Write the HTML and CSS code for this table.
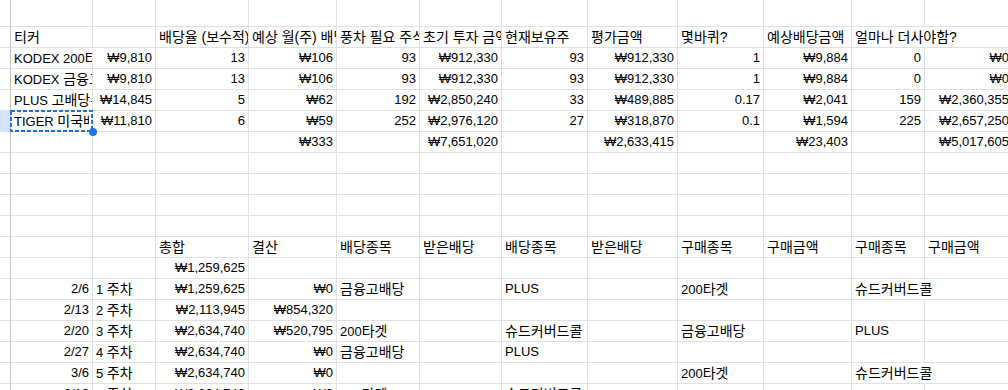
FILE: index.html
```html
<!DOCTYPE html>
<html lang="ko">
<head>
<meta charset="utf-8">
<title>배당 시트</title>
<link rel="stylesheet" href="styles.css">
</head>
<body>
<div class="sheet">
  <div class="r top"><div class="c h"></div><div class="c"></div><div class="c"></div><div class="c"></div><div class="c"></div><div class="c"></div><div class="c"></div><div class="c"></div><div class="c"></div><div class="c"></div><div class="c"></div><div class="c"></div><div class="c"></div></div>
  <div class="r"><div class="c h"></div><div class="c k">티커</div><div class="c"></div><div class="c k">배당율 (보수적)</div><div class="c k">예상 월(주) 배당금</div><div class="c k">풍차 필요 주식수</div><div class="c k">초기 투자 금액</div><div class="c k">현재보유주</div><div class="c k">평가금액</div><div class="c k">몇바퀴?</div><div class="c k">예상배당금액</div><div class="c k spill">얼마나 더사야함?</div><div class="c"></div></div>
  <div class="r"><div class="c h"></div><div class="c">KODEX 200<span class="k">타겟위클리커버드콜</span></div><div class="c n">₩9,810</div><div class="c n">13</div><div class="c n">₩106</div><div class="c n">93</div><div class="c n">₩912,330</div><div class="c n">93</div><div class="c n">₩912,330</div><div class="c n">1</div><div class="c n">₩9,884</div><div class="c n">0</div><div class="c n">₩0</div></div>
  <div class="r"><div class="c h"></div><div class="c">KODEX <span class="k">금융고배당</span>TOP10<span class="k">타겟위클리커버드콜</span></div><div class="c n">₩9,810</div><div class="c n">13</div><div class="c n">₩106</div><div class="c n">93</div><div class="c n">₩912,330</div><div class="c n">93</div><div class="c n">₩912,330</div><div class="c n">1</div><div class="c n">₩9,884</div><div class="c n">0</div><div class="c n">₩0</div></div>
  <div class="r"><div class="c h"></div><div class="c">PLUS <span class="k">고배당주위클리커버드콜</span></div><div class="c n">₩14,845</div><div class="c n">5</div><div class="c n">₩62</div><div class="c n">192</div><div class="c n">₩2,850,240</div><div class="c n">33</div><div class="c n">₩489,885</div><div class="c n">0.17</div><div class="c n">₩2,041</div><div class="c n">159</div><div class="c n">₩2,360,355</div></div>
  <div class="r"><div class="c h sel-row"></div><div class="c sel"><span class="sel-txt">TIGER <span class="k">미국배당다우존스타겟데일리커버드콜</span></span><svg class="ants" width="83" height="22" viewBox="0 0 83 22" aria-hidden="true"><rect x="1" y="1" width="81" height="20" fill="none" stroke="#1a73e8" stroke-width="2" stroke-dasharray="4 2"/></svg><span class="handle"></span></div><div class="c n">₩11,810</div><div class="c n">6</div><div class="c n">₩59</div><div class="c n">252</div><div class="c n">₩2,976,120</div><div class="c n">27</div><div class="c n">₩318,870</div><div class="c n">0.1</div><div class="c n">₩1,594</div><div class="c n">225</div><div class="c n">₩2,657,250</div></div>
  <div class="r"><div class="c h"></div><div class="c"></div><div class="c"></div><div class="c"></div><div class="c n">₩333</div><div class="c"></div><div class="c n">₩7,651,020</div><div class="c"></div><div class="c n">₩2,633,415</div><div class="c"></div><div class="c n">₩23,403</div><div class="c"></div><div class="c n">₩5,017,605</div></div>
  <div class="r"><div class="c h"></div><div class="c"></div><div class="c"></div><div class="c"></div><div class="c"></div><div class="c"></div><div class="c"></div><div class="c"></div><div class="c"></div><div class="c"></div><div class="c"></div><div class="c"></div><div class="c"></div></div>
  <div class="r"><div class="c h"></div><div class="c"></div><div class="c"></div><div class="c"></div><div class="c"></div><div class="c"></div><div class="c"></div><div class="c"></div><div class="c"></div><div class="c"></div><div class="c"></div><div class="c"></div><div class="c"></div></div>
  <div class="r"><div class="c h"></div><div class="c"></div><div class="c"></div><div class="c"></div><div class="c"></div><div class="c"></div><div class="c"></div><div class="c"></div><div class="c"></div><div class="c"></div><div class="c"></div><div class="c"></div><div class="c"></div></div>
  <div class="r"><div class="c h"></div><div class="c"></div><div class="c"></div><div class="c"></div><div class="c"></div><div class="c"></div><div class="c"></div><div class="c"></div><div class="c"></div><div class="c"></div><div class="c"></div><div class="c"></div><div class="c"></div></div>
  <div class="r"><div class="c h"></div><div class="c"></div><div class="c"></div><div class="c k">총합</div><div class="c k">결산</div><div class="c k">배당종목</div><div class="c k">받은배당</div><div class="c k">배당종목</div><div class="c k">받은배당</div><div class="c k">구매종목</div><div class="c k">구매금액</div><div class="c k">구매종목</div><div class="c k">구매금액</div></div>
  <div class="r"><div class="c h"></div><div class="c"></div><div class="c"></div><div class="c n">₩1,259,625</div><div class="c"></div><div class="c"></div><div class="c"></div><div class="c"></div><div class="c"></div><div class="c"></div><div class="c"></div><div class="c"></div><div class="c"></div></div>
  <div class="r"><div class="c h"></div><div class="c n">2/6</div><div class="c">1 <span class="k">주차</span></div><div class="c n">₩1,259,625</div><div class="c n">₩0</div><div class="c k">금융고배당</div><div class="c"></div><div class="c">PLUS</div><div class="c"></div><div class="c">200<span class="k">타겟</span></div><div class="c"></div><div class="c k spill">슈드커버드콜</div><div class="c"></div></div>
  <div class="r"><div class="c h"></div><div class="c n">2/13</div><div class="c">2 <span class="k">주차</span></div><div class="c n">₩2,113,945</div><div class="c n">₩854,320</div><div class="c"></div><div class="c"></div><div class="c"></div><div class="c"></div><div class="c"></div><div class="c"></div><div class="c"></div><div class="c"></div></div>
  <div class="r"><div class="c h"></div><div class="c n">2/20</div><div class="c">3 <span class="k">주차</span></div><div class="c n">₩2,634,740</div><div class="c n">₩520,795</div><div class="c">200<span class="k">타겟</span></div><div class="c"></div><div class="c k">슈드커버드콜</div><div class="c"></div><div class="c k">금융고배당</div><div class="c"></div><div class="c">PLUS</div><div class="c"></div></div>
  <div class="r"><div class="c h"></div><div class="c n">2/27</div><div class="c">4 <span class="k">주차</span></div><div class="c n">₩2,634,740</div><div class="c n">₩0</div><div class="c k">금융고배당</div><div class="c"></div><div class="c">PLUS</div><div class="c"></div><div class="c"></div><div class="c"></div><div class="c"></div><div class="c"></div></div>
  <div class="r"><div class="c h"></div><div class="c n">3/6</div><div class="c">5 <span class="k">주차</span></div><div class="c n">₩2,634,740</div><div class="c n">₩0</div><div class="c"></div><div class="c"></div><div class="c"></div><div class="c"></div><div class="c">200<span class="k">타겟</span></div><div class="c"></div><div class="c k spill">슈드커버드콜</div><div class="c"></div></div>
  <div class="r"><div class="c h"></div><div class="c n">3/13</div><div class="c">6 <span class="k">주차</span></div><div class="c n">₩2,634,740</div><div class="c n">₩0</div><div class="c">200<span class="k">타겟</span></div><div class="c"></div><div class="c k">슈드커버드콜</div><div class="c"></div><div class="c"></div><div class="c"></div><div class="c"></div><div class="c"></div></div>
</div>
</body>
</html>
```

FILE: styles.css
```css
html, body {
  margin: 0;
  padding: 0;
  background: #ffffff;
  overflow: hidden;
}

.sheet {
  display: grid;
  grid-template-columns: 11px 82px 63px 93px 88px 83px 82px 86px 90px 86px 88px 73px 88px;
  grid-template-rows: 27px;
  grid-auto-rows: 21px;
  width: 1013px;
  font-family: "Liberation Sans", Arial, "Noto Sans CJK KR", sans-serif;
  font-size: 13px;
  color: #000000;
}

.r {
  display: contents;
}

.c {
  box-sizing: border-box;
  border-right: 1px solid #e1e1e1;
  border-bottom: 1px solid #e1e1e1;
  padding: 0 3px;
  line-height: 20px;
  white-space: nowrap;
  overflow: hidden;
}

.k {
  font-size: 14px;
  line-height: 20px;
}

.n {
  text-align: right;
}

.h {
  padding: 0;
  border-right-color: #c4c7c5;
}

.sel-row {
  background: #d3e3fd;
}

.spill {
  overflow: visible;
  border-right-color: transparent;
  position: relative;
  z-index: 1;
}

.sel {
  position: relative;
  overflow: visible;
  z-index: 2;
}

.sel-txt {
  display: block;
  overflow: hidden;
}

.ants {
  position: absolute;
  left: -1px;
  top: -1px;
  display: block;
}

.handle {
  position: absolute;
  right: -5px;
  bottom: -5px;
  width: 8px;
  height: 8px;
  border-radius: 50%;
  background: #1a73e8;
}
```
